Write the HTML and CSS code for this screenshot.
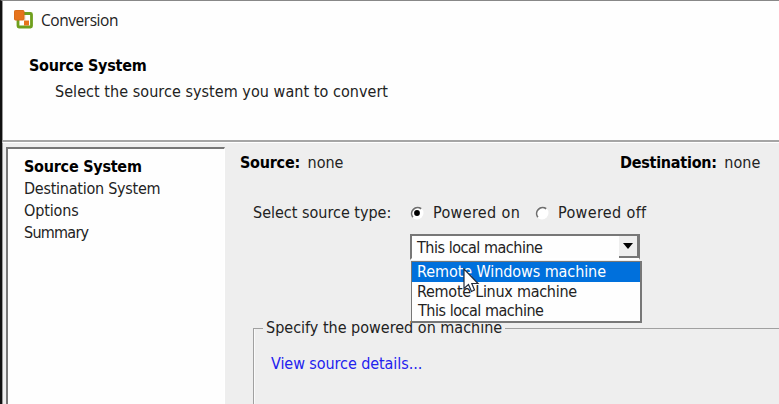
FILE: index.html
```html
<!DOCTYPE html>
<html lang="en">
<head>
<meta charset="utf-8">
<title>Conversion</title>
<link rel="stylesheet" href="styles.css">
</head>
<body>
<div class="window">
  <header class="header">
    <div class="titlebar">
      <svg class="app-icon" width="20" height="20" viewBox="0 0 20 20">
        <rect x="4" y="3.500" width="13.500" height="13.500" rx="1" fill="#fff" stroke="#6f9f1d" stroke-width="2.800"/>
        <rect x="10.500" y="5" width="1" height="5.500" fill="#e8e0c8"/>
        <rect x="10" y="10.500" width="5" height="5" fill="#e6731c"/>
        <rect x="0.500" y="0.500" width="9.500" height="9.500" rx="0.800" fill="#e6731c" stroke="#d96c18"/>
      </svg>
      <span class="title">Conversion</span>
    </div>
    <h1 class="heading">Source System</h1>
    <p class="sub">Select the source system you want to convert</p>
  </header>
  <main class="body">
    <nav class="steps">
      <div class="step bold">Source System</div>
      <div class="step dest">Destination System</div>
      <div class="step">Options</div>
      <div class="step summary">Summary</div>
    </nav>
    <section class="page">
      <div class="status">
        <div class="source"><span class="bold">Source:</span> <span class="none">none</span></div>
        <div class="target"><span class="bold">Destination:</span> <span class="none">none</span></div>
      </div>
      <div class="type-row">
        <span class="type-label">Select source type:</span>
        <svg class="radio" width="14" height="14" viewBox="0 0 14 14"><circle cx="7" cy="7" r="6.500" fill="#fff"/><path d="M2.800 11.200A6 6 0 0 1 11.200 2.800" fill="none" stroke="#6e6e6e" stroke-width="1.700"/><circle cx="7" cy="7" r="2.900" fill="#000"/></svg>
        <span class="on">Powered on</span>
        <svg class="radio off-radio" width="14" height="14" viewBox="0 0 14 14"><circle cx="7" cy="7" r="6.500" fill="#fff"/><path d="M2.800 11.200A6 6 0 0 1 11.200 2.800" fill="none" stroke="#6e6e6e" stroke-width="1.700"/></svg>
        <span class="off">Powered off</span>
      </div>
      <div class="combo">
        <div class="field"><span class="local">This local machine</span><span class="arrow"><svg width="10" height="6" viewBox="0 0 10 6"><path d="M0 0H10L5 6Z"/></svg></span></div>
        <div class="menu">
          <div class="option selected"><span class="win">Remote Windows machine</span></div>
          <div class="option"><span class="linux">Remote Linux machine</span></div>
          <div class="option last"><span class="local">This local machine</span></div>
        </div>
        <svg class="cursor" width="18" height="26" viewBox="0 0 18 26"><path d="M1 1V20.500L5.500 16.500L8.500 23.500L11.500 22L8.800 15.500H15Z" fill="#fff" stroke="#222c3c" stroke-width="1.200"/></svg>
      </div>
      <fieldset class="group">
        <legend><span class="specify">Specify the powered on machine</span></legend>
        <a class="link">View source details...</a>
      </fieldset>
    </section>
  </main>
</div>
</body>
</html>
```
FILE: styles.css
```css
* { box-sizing: border-box; }
body { margin: 0; width: 779px; height: 404px; overflow: hidden; background: #eee; color: #222; font: 16px/22px "DejaVu Sans Condensed", "DejaVu Sans", sans-serif; font-stretch: condensed; white-space: nowrap; }
.window { height: 404px; border-left: 2px solid #111; border-top: 1px solid #888; }
.header { height: 141px; padding-left: 0; background: #fefefe; border-left: 1px solid #999; border-bottom: 2px solid #a5a5a5; }
.titlebar { display: flex; align-items: center; height: 38px; padding-left: 11px; }
.title { margin-left: 7px; font: 15.500px/22px "Open Sans", sans-serif; letter-spacing: -0.45px; }
.heading { margin: 16px 0 0 26px; font-size: 16px; line-height: 22px; letter-spacing: -0.27px; color: #000; }
.sub { margin: 4px 0 0 52px; letter-spacing: 0.05px; }
.bold { font-weight: bold; letter-spacing: -0.25px; color: #000; }
.dest { letter-spacing: -0.25px; }
.step:nth-child(3) { letter-spacing: -0.15px; }
.step.summary { letter-spacing: -0.75px; }
.body { display: flex; height: 262px; padding-left: 3px; border-top: 1px solid #fff; border-left: 1px solid #999; }
.steps { width: 219px; margin-top: 4px; padding: 7px 0 0 16px; background: #fefefe; border: solid #777; border-width: 2px 1px 0 2px; border-right-color: #fff; }
.page { flex: 1; padding-left: 15px; }
.status { display: flex; margin-top: 9px; }
.source { width: 380px; }
.none { margin-left: 3px; }
.type-row { display: flex; align-items: center; margin: 28px 0 0 13px; }
.radio { margin-left: 19px; }
.type-label { width: 138px; }
.on, .off { width: 87px; margin-left: 9px; letter-spacing: 0.35px; }
.off-radio { margin-left: 15px; }
.combo { position: relative; width: 230px; margin: 10px 0 0 170px; }
.field { display: flex; justify-content: space-between; height: 26px; padding-left: 5px; line-height: 23px; background: #fefefe; border: solid #777; border-width: 2px 1px 2px 2px; border-bottom-color: #fff; }
.local { letter-spacing: -0.47px; }
.win { letter-spacing: -0.08px; }
.linux { letter-spacing: -0.27px; }
.arrow { display: flex; align-items: center; justify-content: center; width: 20px; height: 22px; background: #eee; border: solid #777; border-width: 0 2px 2px 0; }
.menu { position: absolute; left: 1px; top: 27px; width: 231px; height: 62px; background: #fefefe; border: solid #777; border-width: 1px 2px 2px 1px; z-index: 1; }
.option { height: 19.500px; padding-left: 5px; line-height: 19px; }
.last { padding-left: 6px; }
.selected { color: #fff; background: #0070dc; }
.cursor { position: absolute; left: 53px; top: 34px; z-index: 2; }
.group { height: 100px; margin: 57px -3px 0 13px; padding: 14px 0 0 17px; border: 1px solid #a0a0a0; box-shadow: inset 1px 0 #fafafa; }
legend { padding: 0 3px; margin-left: -8px; }
.link { color: #22e; letter-spacing: -0.07px; }
```
